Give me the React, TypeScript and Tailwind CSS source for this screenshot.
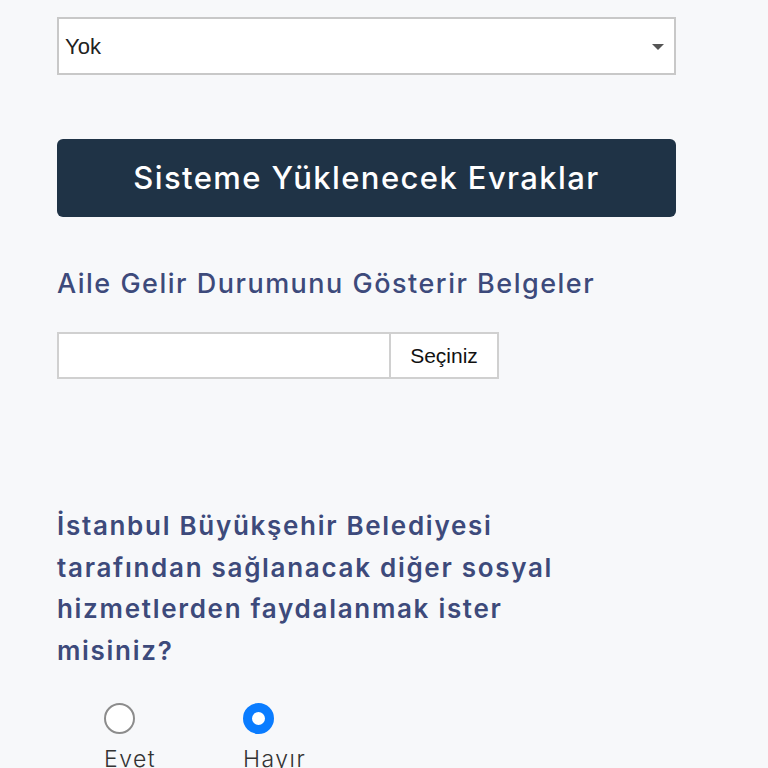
import { useState } from "react";

const headFont = { fontFamily: "Inter, 'Noto Sans', sans-serif" };

const RadioOption: React.FC<{
  label: string;
  checked: boolean;
  onSelect: () => void;
}> = ({ label, checked, onSelect }) => (
  <button
    type="button"
    onClick={onSelect}
    className="flex flex-col items-start w-[62px]"
  >
    <span
      className={
        checked
          ? "block w-[31px] h-[31px] rounded-full border-[9px] border-[#0a7cff] bg-white"
          : "block w-[31px] h-[31px] rounded-full border-[2px] border-[#8c8c8c] bg-white"
      }
    />
    <span
      className="mt-[12px] text-[23px] leading-[26px] font-light tracking-[1.5px] text-[#333]"
      style={headFont}
    >
      {label}
    </span>
  </button>
);

export default function App() {
  const [answer, setAnswer] = useState<"evet" | "hayir">("hayir");

  return (
    <div className="min-h-[768px] bg-[#f7f8fa] px-[57px] pt-[17px]">
      <div className="w-[619px]">
        {/* select */}
        <div className="relative h-[58px] bg-white border-2 border-[#c8c8c8] flex items-center">
          <span
            className="pl-[6px] text-[22px] text-[#222]"
            style={{ fontFamily: "'Liberation Sans', Arial, sans-serif" }}
          >
            Yok
          </span>
          <span className="absolute right-[10px] top-[25px] w-0 h-0 border-l-[6px] border-r-[6px] border-t-[6px] border-l-transparent border-r-transparent border-t-[#555]" />
        </div>

        {/* section header */}
        <div
          className="mt-[64px] h-[78px] rounded-[6px] bg-[#1f3346] flex items-center justify-center text-white text-[31px] font-medium tracking-[1.4px]"
          style={headFont}
        >
          Sisteme Yüklenecek Evraklar
        </div>

        <h3
          className="mt-[51px] text-[27px] leading-[32px] font-medium tracking-[1.5px] text-[#3d4a7b]"
          style={headFont}
        >
          Aile Gelir Durumunu Gösterir Belgeler
        </h3>

        {/* file input */}
        <div
          className="mt-[32px] flex w-[442px] h-[47px] bg-white border-2 border-[#d0d0d0]"
          style={{ fontFamily: "'Liberation Sans', Arial, sans-serif" }}
        >
          <div className="flex-1" />
          <div className="w-[108px] border-l-2 border-[#d0d0d0] flex items-center justify-center text-[21px] text-[#111]">
            Seçiniz
          </div>
        </div>

        <p
          className="mt-[126px] w-[510px] text-[26px] leading-[41.5px] font-semibold tracking-[1.7px] text-[#3d4a7b]"
          style={headFont}
        >
          İstanbul Büyükşehir Belediyesi tarafından sağlanacak diğer sosyal
          hizmetlerden faydalanmak ister misiniz?
        </p>

        <div className="mt-[32px] ml-[47px] flex gap-[77px]">
          <RadioOption
            label="Evet"
            checked={answer === "evet"}
            onSelect={() => setAnswer("evet")}
          />
          <RadioOption
            label="Hayır"
            checked={answer === "hayir"}
            onSelect={() => setAnswer("hayir")}
          />
        </div>
      </div>
    </div>
  );
}
